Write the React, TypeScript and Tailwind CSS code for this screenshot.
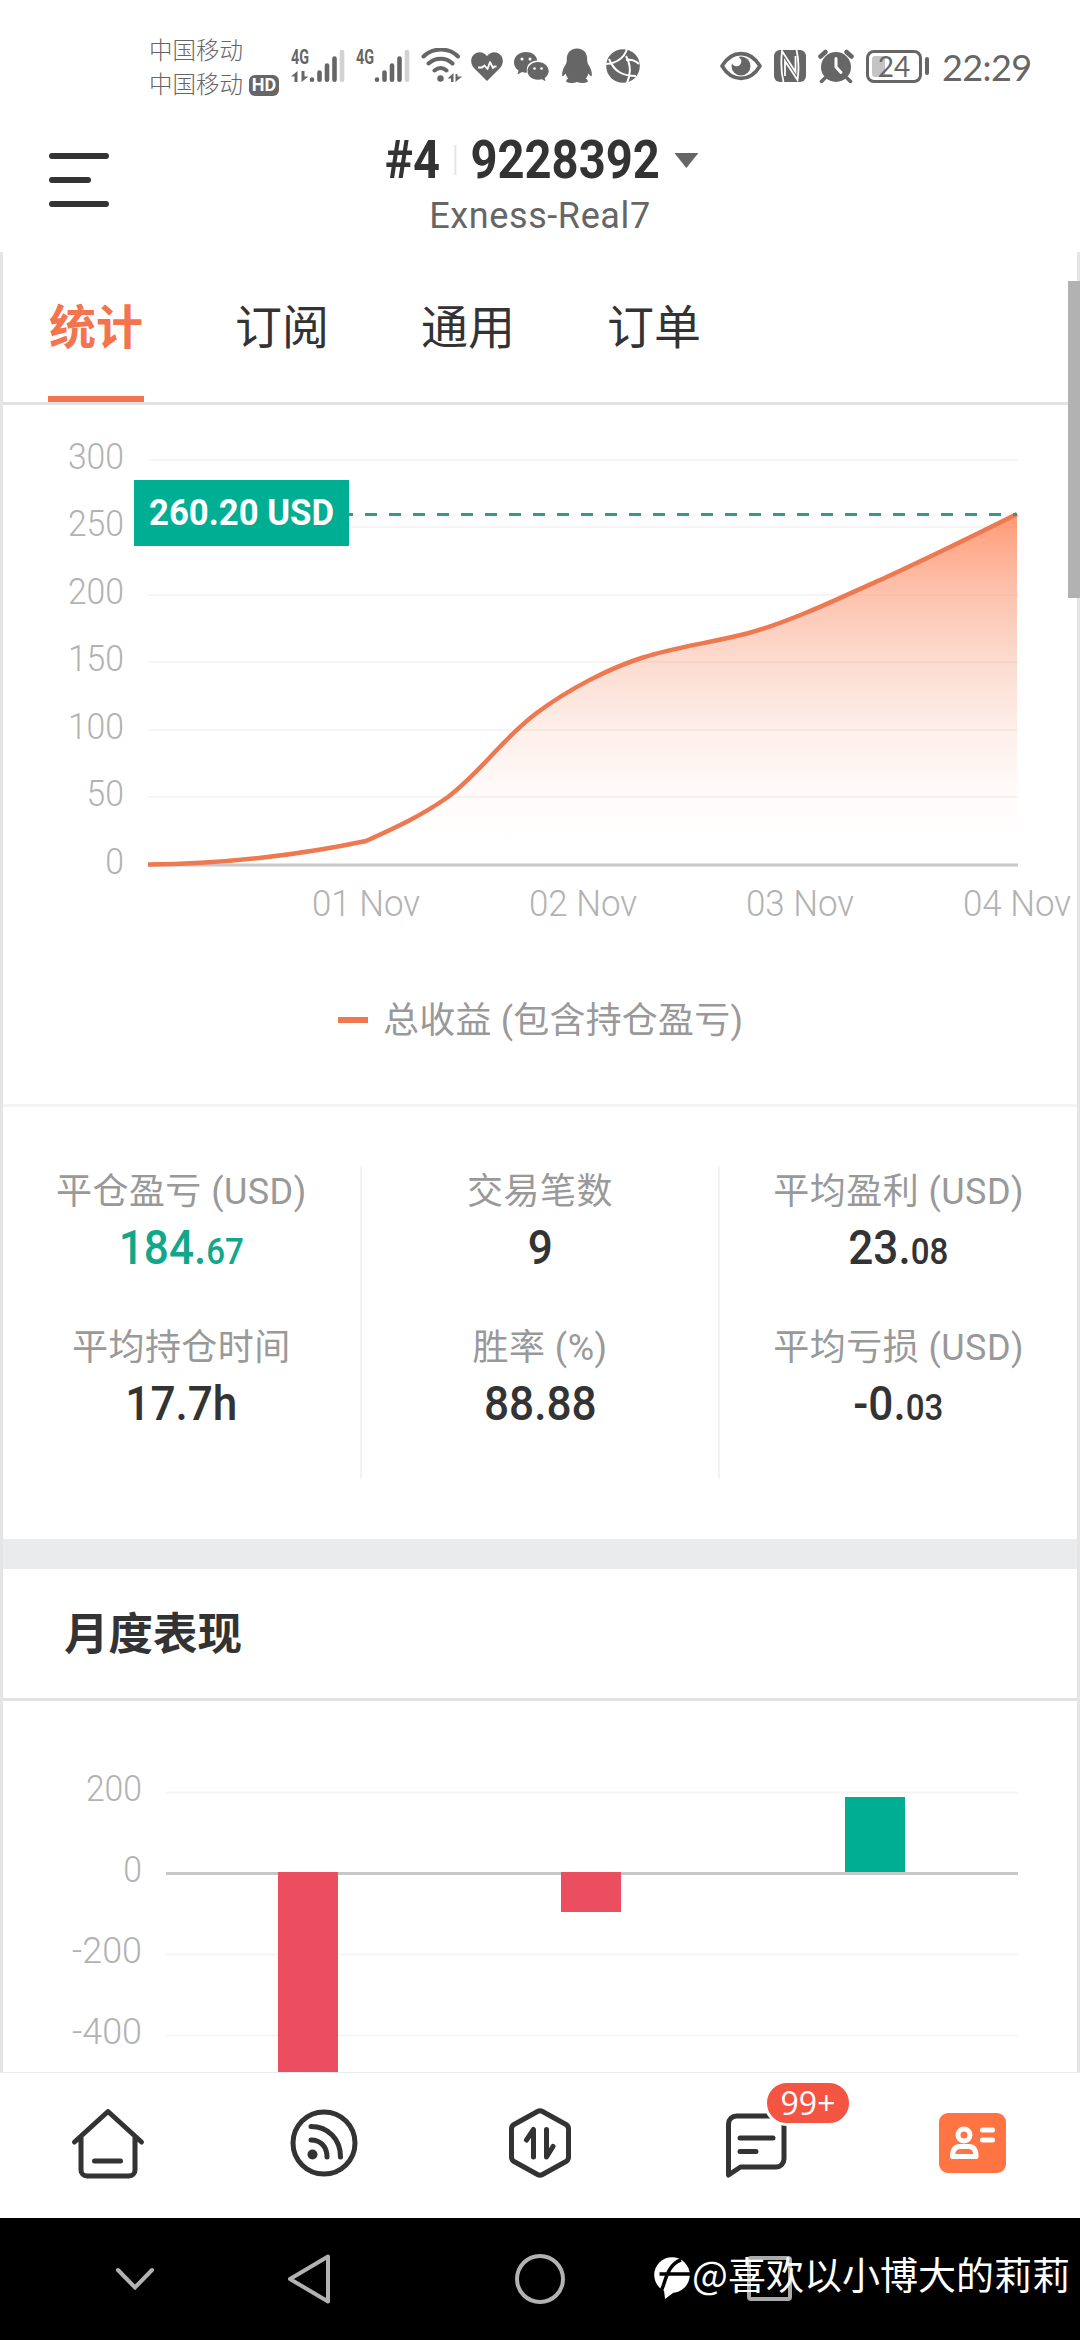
const tabs = ["统计", "订阅", "通用", "订单"];

const profitTicks = [
  { label: "300", y: 460 },
  { label: "250", y: 527 },
  { label: "200", y: 595 },
  { label: "150", y: 662 },
  { label: "100", y: 730 },
  { label: "50", y: 797 },
  { label: "0", y: 865 },
];

const profitDays = [
  { label: "01 Nov", x: 366 },
  { label: "02 Nov", x: 583 },
  { label: "03 Nov", x: 800 },
  { label: "04 Nov", x: 1017 },
];

const monthTicks = [
  { label: "200", y: 1792 },
  { label: "0", y: 1873 },
  { label: "-200", y: 1954 },
  { label: "-400", y: 2035 },
];

const stats = [
  [
    { name: "平仓盈亏 (USD)", value: "184.", small: "67", green: true },
    { name: "平均持仓时间", value: "17.7h", small: "" },
  ],
  [
    { name: "交易笔数", value: "9", small: "" },
    { name: "胜率 (%)", value: "88.88", small: "" },
  ],
  [
    { name: "平均盈利 (USD)", value: "23.", small: "08" },
    { name: "平均亏损 (USD)", value: "-0.", small: "03" },
  ],
];

const curve =
  "C220 864.5 300 855 366 841 C395 828 421 816 448 797 C482 771 500 741 536 713.5 C570 688 610 668 643 657.5 C675 647 705 644 747 633.5 C800 619 860 588 884 578.3 C930 557 975 535 1017 514";

function Signal({ data }: { data?: boolean }) {
  return (
    <div className="relative">
      <div className="absolute top-[-1px] left-0 origin-left scale-x-[0.720] text-[20px] leading-[20px] font-bold">4G</div>
      <svg className="h-[36px] w-[55px]" viewBox="0 0 55 36">
        {data && (
          <g fill="#666">
            <path d="M0 28.500L6.500 23V34H3.500V28.500zM10.500 23H13.500V28.500H17.500L10.500 34z" />
          </g>
        )}
        <g stroke="#666" strokeWidth="4.600" strokeLinecap="round">
          <path d="M21 31.500v.2M28.500 24.500v7.200M36 17.500v14.200M43.500 10.500v21.200" />
          <path d="M51 4v27.700" stroke="#d2d2d2" />
        </g>
      </svg>
    </div>
  );
}

function StatusBar() {
  return (
    <div className="flex h-[120px] items-start text-[#666]">
      <div className="mt-[34px] ml-[149px] text-[23.500px] leading-[34px] font-light">
        <div>中国移动</div>
        <div className="flex items-center">
          中国移动
          <span className="ml-[6px] flex h-[21px] w-[30px] items-center justify-center rounded-[6px] bg-[#666] text-[18px] leading-none font-bold text-white">
            HD
          </span>
        </div>
      </div>
      <div className="mt-[48px] ml-[12px] flex h-[36px]">
        <Signal data />
        <div className="ml-[10px]">
          <Signal />
        </div>
        <svg className="ml-[10px] h-[36px] w-[42px]" viewBox="0 0 42 36" fill="none" stroke="#666" strokeWidth="4" strokeLinecap="round">
          <path d="M2.500 8.500C12-.8 28-.8 37 8.500M7.500 15.500C14.500 9 25 9 31.500 15.500M13.500 22.500c3.800-3.300 8.500-3.300 12 0" />
          <circle cx="19.500" cy="30.500" r="3.200" fill="#666" stroke="none" />
          <path d="M26.500 30.500L32.500 25v9h-2.500v-3.500zM34.500 34v-8h2v2.500h4.500z" fill="#666" stroke="none" />
        </svg>
        <svg className="ml-[8px] h-[36px] w-[32px]" viewBox="0 0 32 36">
          <path d="M16 33L3 20C-1 15.500-.5 9.500 3 6.500 7 3 12.500 3.500 16 8c3.500-4.500 9-5 13-1.500 3.500 3 4 9 0 13.500z" fill="#666" />
          <path d="M7 19.500h4l2.500-2 3 3.500 2.500-7 3 6 1.500-1.500h2" stroke="#fff" strokeWidth="1.800" fill="none" strokeLinejoin="round" />
        </svg>
        <svg className="ml-[11px] h-[36px] w-[35px]" viewBox="0 0 35 36" fill="#666">
          <path d="M12 4C5 4 0 8.500 0 14.500c0 3.500 1.800 6 4.500 8l-1 4 4.500-2.500c2 .6 3.500.8 5 .6-1.500-7.500 3.500-12 10.300-12.200C22.500 7.500 18 4 12 4z" />
          <path d="M24 14c-6 0-10.500 4-10.500 9s4.500 8.700 10.500 8.700c1.500 0 2.800-.2 4-.5l3.500 2-.8-3.300c2.500-1.700 4-4.200 4-6.900C34.500 18 30 14 24 14z" />
          <g fill="#fff">
            <circle cx="8" cy="11" r="1.500" />
            <circle cx="16" cy="11" r="1.500" />
            <circle cx="20.500" cy="20.500" r="1.300" />
            <circle cx="27.500" cy="20.500" r="1.300" />
          </g>
        </svg>
        <svg className="ml-[12px] h-[36px] w-[32px]" viewBox="0 0 32 36" fill="#666">
          <path d="M16 .5C9 .5 5.500 5.500 5.800 12c0 1.500-.3 2.500-.8 4C2.500 19.500.8 23.500 1.200 28c.8.5 2-.5 3.300-2.500.7 2 1.500 3.600 2.800 5-1.800.8-2.500 2-1.800 3.500 3 1.500 7.500 1.200 10.500 0 3 1.200 7.500 1.500 10.500 0 .7-1.500 0-2.700-1.800-3.500 1.300-1.400 2.100-3 2.800-5 1.300 2 2.500 3 3.300 2.500.4-4.500-1.300-8.500-3.800-12-.5-1.500-.8-2.500-.8-4C26.500 5.500 23 .5 16 .5z" />
        </svg>
        <svg className="ml-[13px] h-[36px] w-[34px]" viewBox="0 0 34 36">
          <circle cx="17" cy="18" r="16.800" fill="#666" />
          <path d="M0 16C12 15 18 10 21 1M3 11c5 12 13 17 27 17M20 8c5 9 5 18 1 27M20 12c5-1 9 0 13 4" stroke="#fff" strokeWidth="2" fill="none" />
        </svg>
      </div>
      <div className="mt-[48px] ml-[80px] flex h-[36px] items-center">
        <svg className="h-[30px] w-[42px]" viewBox="0 0 42 30">
          <path d="M2 15C12-1.500 30-1.500 40 15C30 31.500 12 31.500 2 15z" stroke="#666" strokeWidth="3.600" fill="none" strokeLinejoin="round" />
          <circle cx="21" cy="15" r="9.500" fill="#666" />
          <circle cx="16.500" cy="10.500" r="4.800" fill="#fff" />
        </svg>
        <svg className="ml-[12px] h-[32px] w-[32px]" viewBox="0 0 32 32">
          <rect width="32" height="32" rx="6" fill="#666" />
          <path d="M9.500 32C7 22 7 10 8 1L21.500 22V6M22.500 0C25 10 25 20 23.500 30L11 11V26" stroke="#fff" strokeWidth="1.800" fill="none" />
        </svg>
        <svg className="ml-[12px] h-[34px] w-[36px]" viewBox="0 0 36 34">
          <circle cx="18" cy="18" r="15" fill="#666" />
          <path d="M2.500 7.500L7.500 3M33.500 7.500L28.500 3" stroke="#666" strokeWidth="4.500" strokeLinecap="round" />
          <path d="M7 29l-3.500 3.500M29 29l3.500 3.500" stroke="#666" strokeWidth="3.500" strokeLinecap="round" />
          <path d="M18 9.500v8.500l5 5.500" stroke="#fff" strokeWidth="3" fill="none" strokeLinecap="round" />
        </svg>
        <div className="relative ml-[12px] flex h-[33px] w-[56px] items-center justify-center rounded-[8px] border-[3px] border-[#666]">
          <div className="absolute top-[3px] left-[3px] h-[21px] w-[13px] rounded-l-[3px] bg-[#c4c4c4]" />
          <span className="relative font-[Lato] text-[28px] leading-none">24</span>
        </div>
        <div className="ml-[3px] h-[18px] w-[4px] rounded-full bg-[#666]" />
        <div className="mt-[2px] ml-[13px] font-[Lato] text-[36px] leading-[36px] tracking-[-0.600px]">22:29</div>
      </div>
    </div>
  );
}

function Header() {
  return (
    <div className="relative flex h-[132px] flex-col items-center">
      <div className="absolute top-[33px] left-[49px] flex flex-col gap-[18px]">
        <div className="h-[6px] w-[60px] rounded-full bg-[#333]" />
        <div className="h-[6px] w-[42px] rounded-full bg-[#333]" />
        <div className="h-[6px] w-[60px] rounded-full bg-[#333]" />
      </div>
      <div className="flex h-[60px] scale-x-[0.890] items-center pt-[20px] pl-[4px] text-[53px] leading-none font-bold text-[#333]">
        #4
        <span className="mx-[16px] h-[30px] w-[2px] bg-[#e3e3e3]" />
        9228392
        <svg className="ml-[16px] h-[15px] w-[27px]" viewBox="0 0 27 15">
          <path d="M0 0h27L13.500 15z" fill="#666" />
        </svg>
      </div>
      <div className="mt-[16px] text-[36px] leading-[40px] tracking-[0.600px] text-[#666]">Exness-Real7</div>
    </div>
  );
}

function ProfitChart() {
  return (
    <svg className="block h-[699px] w-[1074px]" viewBox="3 405 1074 699">
      <defs>
        <linearGradient id="profit" x1="0" y1="514" x2="0" y2="865" gradientUnits="userSpaceOnUse">
          <stop offset="0" stopColor="#ff7441" stopOpacity="0.720" />
          <stop offset="0.230" stopColor="#fb7748" stopOpacity="0.440" />
          <stop offset="0.420" stopColor="#f47a50" stopOpacity="0.270" />
          <stop offset="0.620" stopColor="#f47a50" stopOpacity="0.120" />
          <stop offset="0.800" stopColor="#f47a50" stopOpacity="0.030" />
          <stop offset="1" stopColor="#ffffff" stopOpacity="0" />
        </linearGradient>
      </defs>
      {profitTicks.map((tick) => (
        <g key={tick.label}>
          <path d={`M148 ${tick.y}H1018`} stroke={tick.label === "0" ? "#c8c8c8" : "#f5f5f5"} strokeWidth={tick.label === "0" ? 3 : 2} />
          <text
            x="124"
            y={tick.y + 8.500}
            fontSize="36"
            fontWeight="300"
            textAnchor="end"
            fill="#b2b2b2"
            textLength={tick.label.length * 18.700}
            lengthAdjust="spacingAndGlyphs"
          >
            {tick.label}
          </text>
        </g>
      ))}
      {profitDays.map((day) => (
        <text key={day.label} x={day.x} y="915.500" fontSize="36" fontWeight="300" textAnchor="middle" fill="#b2b2b2" textLength="108" lengthAdjust="spacingAndGlyphs">
          {day.label}
        </text>
      ))}
      <path d={`M148 864.500 ${curve} V865 H148z`} fill="url(#profit)" />
      <path d={`M148 864.500 ${curve}`} fill="none" stroke="#ee7850" strokeWidth="4.500" />
      <path d="M149 514.500H1017" stroke="#339988" strokeWidth="3" strokeDasharray="12 12" />
      <rect x="134" y="480" width="215" height="66" fill="#00ae93" />
      <text x="149" y="525" fontSize="36" fontWeight="700" fill="#fff" textLength="185" lengthAdjust="spacingAndGlyphs">
        260.20 USD
      </text>
      <path d="M338 1020H368" stroke="#ee7850" strokeWidth="6" />
      <text x="383" y="1033" fontSize="36" fill="#999" textLength="360">
        总收益 (包含持仓盈亏)
      </text>
    </svg>
  );
}

function Stats() {
  return (
    <div className="flex h-[435px] border-t-[3px] border-[#f5f5f5] pt-[60px]">
      {stats.map((col, i) => (
        <div key={i} className="h-[312px] flex-1 border-r-2 border-[#f2f2f2] text-center last:border-r-0">
          {col.map((item) => (
            <div key={item.name} className="h-[156px]">
              <div className="pt-[1px] text-[36px] leading-[48px] tracking-[0.450px] text-[#999]">{item.name}</div>
              <div
                className={`scale-x-[0.920] text-[48px] leading-[64px] font-medium ${item.green ? "text-[#12a78b]" : "text-[#333]"}`}
              >
                {item.value}
                <span className="text-[36px]">{item.small}</span>
              </div>
            </div>
          ))}
        </div>
      ))}
    </div>
  );
}

function MonthChart() {
  return (
    <svg className="block h-[371px] w-[1074px]" viewBox="3 1701 1074 371">
      {monthTicks.map((tick) => (
        <g key={tick.label}>
          <path d={`M166 ${tick.y + 0.5}H1018`} stroke={tick.label === "0" ? "#c8c8c8" : "#f5f5f5"} strokeWidth={tick.label === "0" ? 3 : 2} />
          <text
            x="142"
            y={tick.y + 9}
            fontSize="36"
            fontWeight="300"
            textAnchor="end"
            fill="#b2b2b2"
            textLength={tick.label.startsWith("-") ? 70 : tick.label.length * 18.700}
            lengthAdjust="spacingAndGlyphs"
          >
            {tick.label}
          </text>
        </g>
      ))}
      <rect x="278" y="1872" width="60" height="200" fill="#eb4f5f" />
      <rect x="561" y="1872" width="60" height="40" fill="#eb4f5f" />
      <rect x="845" y="1797" width="60" height="75" fill="#00ae93" />
    </svg>
  );
}

function BottomNav() {
  return (
    <div className="grid h-[146px] grid-cols-5 items-center justify-items-center border-t border-[#ebebeb] pb-[5px]">
      <svg className="h-[74px] w-[76px]" viewBox="0 0 76 74" fill="none" stroke="#333" strokeWidth="5" strokeLinecap="round" strokeLinejoin="round">
        <path d="M4.500 36L38 5.500L71.500 36M11 31V64a6 6 0 0 0 6 6H59a6 6 0 0 0 6-6V31M24.500 55H50.500" />
      </svg>
      <svg className="h-[74px] w-[74px]" viewBox="0 0 74 74" fill="none" stroke="#333" strokeWidth="5" strokeLinecap="round">
        <circle cx="37" cy="37" r="31" />
        <path d="M24 20.500C41 20.500 53.500 33 53.500 51M24 34C34 34 40 41 40 51" />
        <circle cx="25.500" cy="48.500" r="5" fill="#333" stroke="none" />
      </svg>
      <svg className="h-[74px] w-[66px]" viewBox="0 0 66 74" fill="none" stroke="#333" strokeWidth="5" strokeLinecap="round" strokeLinejoin="round">
        <path d="M30.500 5.500Q33 4 35.500 5.500L59 18.500Q61.500 20 61.500 23V51Q61.500 54 59 55.500L35.500 68.500Q33 70 30.500 68.500L7 55.500Q4.500 54 4.500 51V23Q4.500 20 7 18.500z" />
        <path d="M19.500 34L26.500 23.500V51M39.500 23.500V51L46 40.500" />
      </svg>
      <div className="relative">
        <svg className="h-[74px] w-[66px]" viewBox="0 0 66 74" fill="none" stroke="#333" strokeWidth="5" strokeLinecap="round" strokeLinejoin="round">
          <path d="M5.500 68V17a8 8 0 0 1 8-8H53a8 8 0 0 1 8 8V52a8 8 0 0 1-8 8H17.500z" transform="translate(0 1)" />
          <path d="M17 31H50M17 44.500H33" transform="translate(0 1)" />
        </svg>
        <div className="absolute top-[-26px] left-[41px] flex h-[46px] w-[88px] items-center justify-center rounded-full border-[3px] border-white bg-[#f45542] font-['Open_Sans'] text-[32px] leading-none text-white">
          99+
        </div>
      </div>
      <svg className="h-[60px] w-[67px]" viewBox="0 0 67 60">
        <rect width="67" height="60" rx="9" fill="#ff7442" />
        <g fill="none" stroke="#fff" strokeWidth="5" strokeLinecap="round" strokeLinejoin="round">
          <circle cx="25" cy="22" r="6" />
          <path d="M13.500 43.500C13.500 36 17 33.500 21 33.500H30C34 33.500 37 36 37 43.500zM43.500 17H53.500M43.500 27H53.500" />
        </g>
      </svg>
    </div>
  );
}

function AndroidBar() {
  return (
    <div className="relative flex h-[122px] items-center bg-black pb-px">
      <svg className="ml-[114px] h-[26px] w-[42px]" viewBox="0 0 42 26" fill="none" stroke="#b2b2b2" strokeWidth="4" strokeLinecap="round">
        <path d="M4 4L21 21.500L38 4" />
      </svg>
      <svg className="ml-[130px] h-[52px] w-[46px]" viewBox="0 0 46 52" fill="none" stroke="#b2b2b2" strokeWidth="4" strokeLinejoin="round">
        <path d="M42 3.500V48.500L4 26z" />
      </svg>
      <div className="ml-[183px] h-[50px] w-[50px] rounded-full border-4 border-[#b2b2b2]" />
      <div className="ml-[182px] h-[45px] w-[45px] rounded-[4px] border-4 border-[#aaa]" />
      <div className="absolute top-[28px] left-[654px] flex items-center text-[38px] leading-[54px] text-white">
        <svg className="mt-[9px] mr-[2px] h-[42px] w-[36px]" viewBox="0 0 36 42">
          <circle cx="18" cy="18" r="17.800" fill="#fff" />
          <path d="M10 33L11 42L23 33z" fill="#fff" />
          <path d="M5.500 17H36M7 34C11 28 12 8 27 3" stroke="#000" strokeWidth="3.500" fill="none" />
        </svg>
        <span className="font-['Noto_Sans_CJK_SC'] whitespace-nowrap">@喜欢以小博大的莉莉</span>
      </div>
    </div>
  );
}

export default function App() {
  return (
    <div className="relative h-[2340px] w-[1080px] overflow-hidden bg-white font-[Roboto,'Noto_Sans_CJK_SC',sans-serif]">
      <StatusBar />
      <Header />
      <div className="h-[1820px] overflow-hidden border-x-[3px] border-[#e5e5e5]">
        <div className="flex h-[153px] gap-[90px] border-b-[3px] border-[#e2e2e2] pl-[45px]">
          {tabs.map((tab, i) => (
            <div
              key={tab}
              className={`flex w-[96px] items-center justify-center text-[47px] leading-none whitespace-nowrap ${
                i === 0 ? "border-b-[6px] border-[#f4744e] pt-[6px] font-bold text-[#f4744e]" : "text-[#333]"
              }`}
            >
              {tab}
            </div>
          ))}
        </div>
        <ProfitChart />
        <Stats />
        <div className="h-[30px] bg-[#eaebed]" />
        <div className="flex h-[132px] items-center border-b-[3px] border-[#e3e3e3] pt-[4px] pl-[61px] text-[44.500px] leading-none font-bold text-[#333]">
          月度表现
        </div>
        <MonthChart />
      </div>
      <BottomNav />
      <AndroidBar />
      {/* page scroll thumb */}
      <div className="absolute top-[281px] right-0 h-[317px] w-[12px] bg-[#b2b2b2]" />
    </div>
  );
}
